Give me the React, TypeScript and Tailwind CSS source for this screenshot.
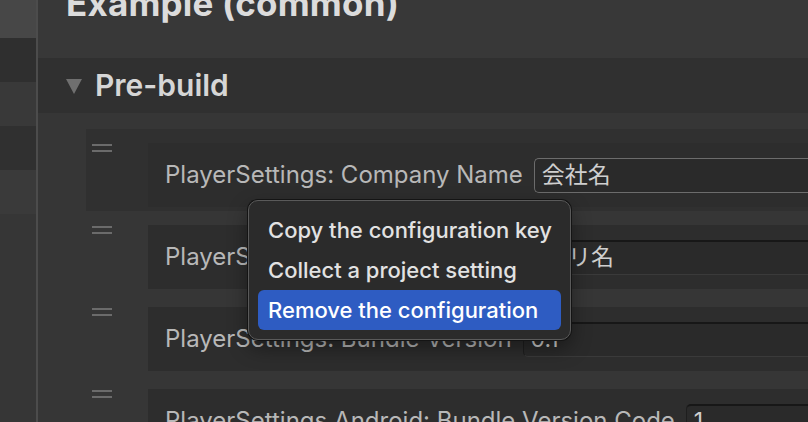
const rows = [
  { label: "PlayerSettings: Company Name", value: "会社名", active: true },
  { label: "PlayerSettings: Product Name", value: "アプリ名" },
  { label: "PlayerSettings: Bundle Version", value: "0.1" },
  { label: "PlayerSettings.Android: Bundle Version Code", value: "1" },
];

function Handle() {
  return (
    <div className="flex flex-col gap-[4px] w-[20px]">
      <div className="h-[2px] bg-[#6b6b6b]" />
      <div className="h-[2px] bg-[#6b6b6b]" />
    </div>
  );
}

function Row({ label, value, active }: { label: string; value: string; active?: boolean }) {
  return (
    <div className={`flex shrink-0 h-[82px] pt-[14px] pb-[4px] ${active ? "bg-[#303030]" : ""}`}>
      <div className="w-[62px] shrink-0 pl-[6px] pt-[1px]">
        <Handle />
      </div>
      <div className="flex-1 h-[64px] bg-[#2d2d2d] flex items-center pl-[17px] gap-[11px] min-w-0">
        <span className="text-[24px] text-[#b8b8b8] whitespace-nowrap">{label}</span>
        <div
          className={`flex-1 h-[35px] flex items-center px-[7px] rounded-l-[5px] bg-[#2a2a2a] text-[23px] text-[#cfcfcf] whitespace-nowrap ${
            active ? "border-[1.5px] border-r-0 border-[#6c6c6c]" : "border-t-2 border-t-[#171717] border-l border-l-[#1e1e1e] border-b border-b-[#3a3a3a]"
          }`}
        >
          {value}
        </div>
      </div>
    </div>
  );
}

export default function App() {
  return (
    <div className="relative w-[808px] h-[422px] overflow-hidden flex bg-[#363636] font-['Inter','Noto_Sans_CJK_JP',sans-serif]">
      {/* sidebar */}
      <div className="w-[36px] shrink-0 flex flex-col">
        <div className="h-[38px] shrink-0 bg-[#474747]" />
        <div className="h-[44px] shrink-0 bg-[#2f2f2f]" />
        <div className="h-[44px] shrink-0 bg-[#393939]" />
        <div className="h-[44px] shrink-0 bg-[#303030]" />
        <div className="h-[44px] shrink-0 bg-[#3a3a3a]" />
        <div className="flex-1 bg-[#363636]" />
      </div>
      <div className="w-[2px] shrink-0 bg-[#4c4c4c]" />

      {/* main */}
      <div className="flex-1 flex flex-col min-w-0 overflow-hidden">
        <div className="h-[58px] shrink-0 bg-[#383838] pl-[28px] overflow-hidden">
          <h1 className="mt-[-18px] text-[35px] font-bold text-[#dcdcdc] whitespace-nowrap leading-[42px] tracking-[0.2px]">
            Example (common)
          </h1>
        </div>
        <div className="h-[55px] shrink-0 bg-[#303030] flex items-center pl-[28px] gap-[13px]">
          <svg width="16" height="15" viewBox="0 0 16 15" className="mt-[2px]">
            <polygon points="0,0 16,0 8,15" fill="#6f6f6f" />
          </svg>
          <span className="text-[30px] font-semibold text-[#d6d6d6]">Pre-build</span>
        </div>
        <div className="pt-[16px] pl-[48px] flex flex-col">
          {rows.map((r) => (
            <Row key={r.label} {...r} />
          ))}
        </div>
      </div>

      {/* context menu */}
      <div className="absolute left-[248px] top-[200px] w-[323px] rounded-[10px] bg-[#2b2b2b] border border-[#5a5a5a] shadow-[0_0_0_1px_#141414,0_8px_20px_rgba(0,0,0,0.4)] py-[9px] px-[9px] flex flex-col">
        <div className="h-[40px] flex items-center px-[10px] text-[22px] font-medium text-[#e2e2e2] whitespace-nowrap">
          Copy the configuration key
        </div>
        <div className="h-[40px] flex items-center px-[10px] text-[22px] font-medium text-[#e2e2e2] whitespace-nowrap">
          Collect a project setting
        </div>
        <div className="h-[40px] flex items-center px-[10px] rounded-[6px] bg-[#2e5cc2] text-[22px] font-medium text-white whitespace-nowrap">
          Remove the configuration
        </div>
      </div>
    </div>
  );
}
